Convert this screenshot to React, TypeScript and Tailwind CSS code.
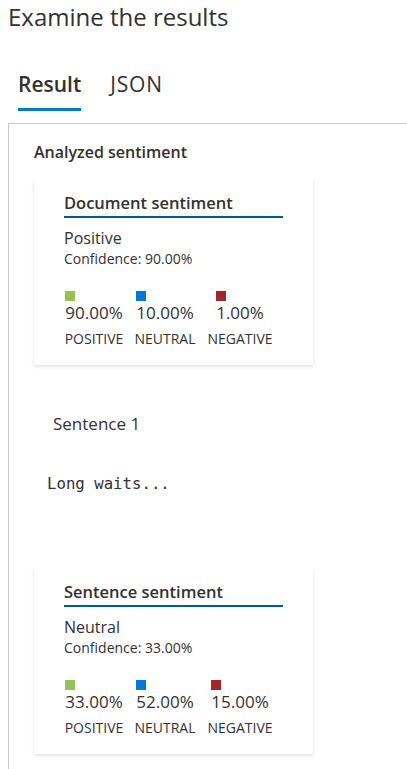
import { ReactNode } from "react";

interface Score {
  value: string;
  label: string;
  color: string;
  width: string;
}

interface SentimentCardProps {
  title: string;
  sentiment: string;
  confidence: string;
  scores: Score[];
}

const SentimentCard = ({ title, sentiment, confidence, scores }: SentimentCardProps) => {
  return (
    <div className="w-[279px] h-[187px] bg-white pl-[30px] pt-[14px] shadow-[0_1.6px_3.6px_rgba(0,0,0,0.13),0_0.3px_0.9px_rgba(0,0,0,0.11)]">
      <div className="w-[219px] border-b-2 border-[#005a9e] text-[16.5px] leading-[22px] font-semibold text-[#323130] pb-[2px]">
        {title}
      </div>
      <div className="mt-[9px] text-[16px] leading-[22px] text-[#323130]">{sentiment}</div>
      <div className="text-[14px] leading-[20px] text-[#323130]">Confidence: {confidence}</div>
      <div className="mt-[22px] flex">
        {scores.map((s) => (
          <ScoreColumn key={s.label} {...s} />
        ))}
      </div>
    </div>
  );
};

const ScoreColumn = ({ value, label, color, width }: Score) => (
  <div className={`flex flex-col items-center ${width}`}>
    <div className="flex flex-col items-start">
      <span className={`w-[10px] h-[10px] ${color}`} />
      <span className="mt-[1px] text-[17px] leading-[22px] text-[#323130]">{value}</span>
    </div>
    <span className="mt-[6px] text-[14px] leading-[18px] uppercase whitespace-nowrap text-[#323130]">{label}</span>
  </div>
);

const Tab = ({ active, children }: { active?: boolean; children: ReactNode }) => (
  <div className="flex flex-col">
    <span className={`text-[21px] leading-[28px] ${active ? "font-semibold" : "tracking-[0.8px]"} text-[#323130]`}>
      {children}
    </span>
    <span className={`mt-[10px] h-[3px] ${active ? "bg-[#0078d4]" : "bg-transparent"}`} />
  </div>
);

const docScores: Score[] = [
  { value: "90.00%", label: "Positive", color: "bg-[#92c353]", width: "w-[60px] mr-[11px]" },
  { value: "10.00%", label: "Neutral", color: "bg-[#0078d4]", width: "w-[60px] mr-[12px]" },
  { value: "1.00%", label: "Negative", color: "bg-[#a4262c]", width: "w-[66px]" },
];

const sentenceScores: Score[] = [
  { value: "33.00%", label: "Positive", color: "bg-[#92c353]", width: "w-[60px] mr-[11px]" },
  { value: "52.00%", label: "Neutral", color: "bg-[#0078d4]", width: "w-[60px] mr-[12px]" },
  { value: "15.00%", label: "Negative", color: "bg-[#a4262c]", width: "w-[66px]" },
];

export default function App() {
  return (
    <div className="w-[407px] h-[769px] overflow-hidden bg-white flex flex-col font-['Open_Sans',sans-serif] text-[#323130]">
      <h1 className="pl-[8px] pt-[2px] text-[24px] leading-[30px] font-normal">Examine the results</h1>

      <div className="mt-[38px] pl-[18px] flex gap-[29px]">
        <Tab active>Result</Tab>
        <Tab>JSON</Tab>
      </div>

      <div className="mt-[12px] ml-[8px] flex-1 border-l border-t border-[#c8c8c8] pl-[25px] pt-[17px]">
        <div className="text-[16px] leading-[22px] font-semibold">Analyzed sentiment</div>

        <div className="mt-[15px]">
          <SentimentCard
            title="Document sentiment"
            sentiment="Positive"
            confidence="90.00%"
            scores={docScores}
          />
        </div>

        <div className="mt-[48px] pl-[19px] text-[17px] leading-[22px]">Sentence 1</div>

        <div className="mt-[38px] pl-[13px] font-['DejaVu_Sans_Mono',monospace] text-[15.7px] leading-[22px]">
          Long waits...
        </div>

        <div className="mt-[72px]">
          <SentimentCard
            title="Sentence sentiment"
            sentiment="Neutral"
            confidence="33.00%"
            scores={sentenceScores}
          />
        </div>
      </div>
    </div>
  );
}
